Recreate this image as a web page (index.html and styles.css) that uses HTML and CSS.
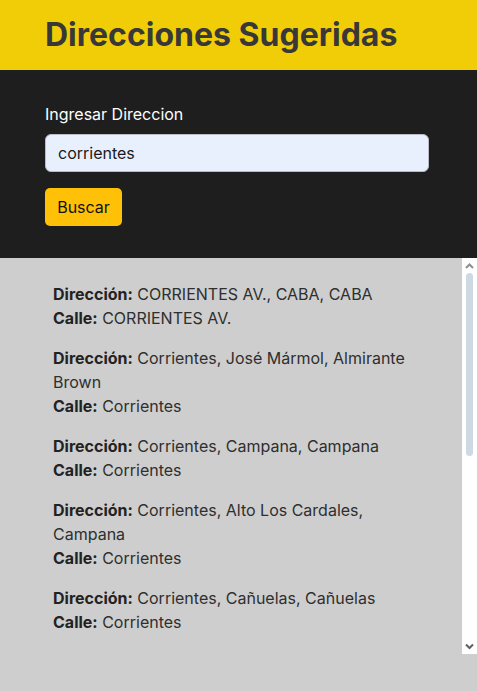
FILE: index.html
```html
<!DOCTYPE html>
<html lang="es">
<head>
<meta charset="utf-8">
<title>Direcciones Sugeridas</title>
<link rel="stylesheet" href="styles.css">
</head>
<body>
<header class="top">
  <div class="wrap">
    <h1 class="title">Direcciones Sugeridas</h1>
  </div>
</header>
<section class="search">
  <div class="wrap">
    <label class="label" for="dir">Ingresar Direccion</label>
    <input class="input" id="dir" type="text" value="corrientes">
    <button class="btn" type="button">Buscar</button>
  </div>
</section>
<main class="results">
  <div class="viewport">
    <div class="wrap list">
      <p class="item"><b>Dirección:</b> CORRIENTES AV., CABA, CABA<br><b>Calle:</b> CORRIENTES AV.</p>
      <p class="item"><b>Dirección:</b> Corrientes, José Mármol, Almirante Brown<br><b>Calle:</b> Corrientes</p>
      <p class="item"><b>Dirección:</b> Corrientes, Campana, Campana<br><b>Calle:</b> Corrientes</p>
      <p class="item"><b>Dirección:</b> Corrientes, Alto Los Cardales, Campana<br><b>Calle:</b> Corrientes</p>
      <p class="item"><b>Dirección:</b> Corrientes, Cañuelas, Cañuelas<br><b>Calle:</b> Corrientes</p>
    </div>
  </div>
  <div class="sbar" aria-hidden="true">
    <svg class="arrow up" width="15" height="15" viewBox="0 0 15 15"><path d="M4 10 L7.5 6.5 L11 10" fill="none" stroke="#8e8e8e" stroke-width="2"/></svg>
    <div class="track"><div class="thumb"></div></div>
    <svg class="arrow down" width="15" height="15" viewBox="0 0 15 15"><path d="M4 5.5 L7.5 9 L11 5.5" fill="none" stroke="#606060" stroke-width="2"/></svg>
  </div>
</main>
</body>
</html>
```

FILE: styles.css
```css
* { box-sizing: border-box; }
html, body { margin: 0; padding: 0; }
body {
  font-family: Inter, "Noto Sans", sans-serif;
  font-size: 16px;
  line-height: 24px;
  background: #cecece;
  height: 691px;
  overflow: hidden;
}
.wrap {
  margin-left: 45px;
  width: 384px;
}
.top {
  background: #f1cd07;
  height: 70px;
  display: flex;
  align-items: center;
}
.title {
  margin: 0;
  font-size: 32px;
  line-height: 40px;
  font-weight: 700;
  color: #383838;
}
.search {
  background: #1e1e1e;
  height: 188px;
  padding-top: 32px;
}
.search .wrap {
  display: flex;
  flex-direction: column;
  align-items: flex-start;
}
.label {
  color: #ffffff;
  font-size: 16px;
  line-height: 24px;
  margin-bottom: 8px;
}
.input {
  width: 384px;
  height: 38px;
  border: 1px solid #b9bcc4;
  border-radius: 6px;
  background: #e8f0fe;
  font: inherit;
  color: #1a1a1a;
  padding: 0 12px;
  margin-bottom: 16px;
  outline: none;
}
.btn {
  height: 38px;
  width: 77px;
  border: none;
  border-radius: 5px;
  background: #ffc107;
  color: #111;
  font: inherit;
  padding: 0;
}
.results {
  background: #cecece;
  display: flex;
  align-items: flex-start;
}
.viewport {
  flex: 1;
  height: 396px;
  overflow: hidden;
}
.list {
  padding: 24px 8px 0;
}
.item {
  margin: 0 0 16px;
  color: #2f2f2f;
}
.item b {
  font-weight: 700;
  color: #222;
}
.sbar {
  width: 15px;
  height: 396px;
  background: #ffffff;
  display: flex;
  flex-direction: column;
}
.arrow {
  display: block;
  flex: none;
}
.track {
  flex: 1;
  padding: 0 4px;
}
.thumb {
  height: 183px;
  background: #cfd9e3;
  border-radius: 4px;
}
```
